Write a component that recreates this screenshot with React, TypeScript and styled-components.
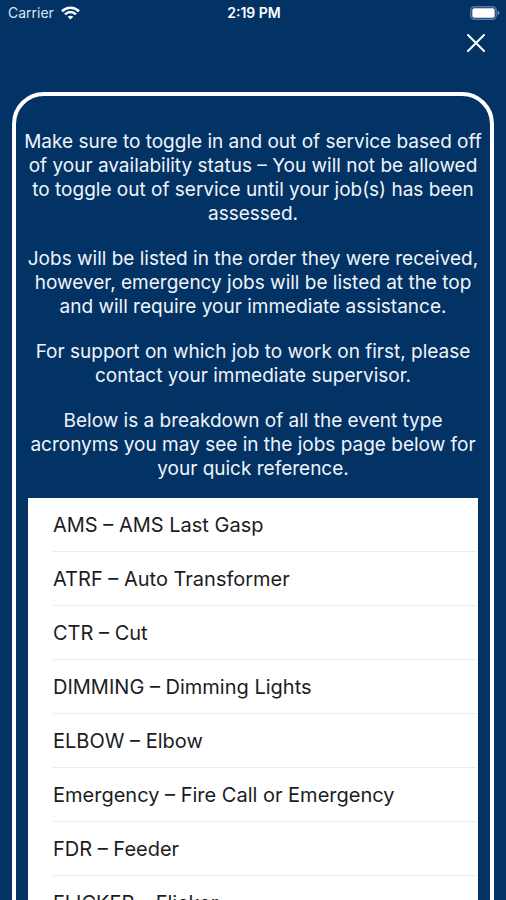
import React from "react";
import styled, { createGlobalStyle } from "styled-components";

const GlobalStyle = createGlobalStyle`
  *, *::before, *::after { box-sizing: border-box; }
  body {
    margin: 0;
    background: #023364;
    font-family: Inter, "Liberation Sans", sans-serif;
  }
`;

const Screen = styled.div`
  display: flex;
  flex-direction: column;
  height: 100vh;
  overflow: hidden;
  background: #023364;
  color: #fff;
`;

const StatusBar = styled.header`
  display: grid;
  grid-template-columns: 1fr auto 1fr;
  align-items: center;
  flex: none;
  height: 26px;
  padding: 0 6px 0 8px;
  font-size: 14px;
  line-height: 16px;
`;

const Carrier = styled.div`
  display: flex;
  align-items: center;
  gap: 7px;
  color: #dfe6ee;
`;

const Clock = styled.time`
  font-weight: 600;
`;

const Battery = styled.div`
  display: flex;
  justify-content: flex-end;
`;

const NavBar = styled.nav`
  display: flex;
  justify-content: flex-end;
  flex: none;
  height: 66px;
  padding: 5px 18px 0;
`;

const CloseButton = styled.button`
  display: flex;
  align-items: center;
  justify-content: center;
  width: 24px;
  height: 24px;
  padding: 0;
  border: 0;
  background: none;
  color: #fff;
  cursor: pointer;
`;

const Scroller = styled.main`
  flex: 1;
  min-height: 0;
  padding: 0 12px;
  overflow-y: auto;
  scrollbar-width: none;
`;

const Card = styled.section`
  padding: 34px 0 24px;
  border: 4px solid #fff;
  border-radius: 32px;
`;

const Intro = styled.div`
  display: flex;
  flex-direction: column;
  gap: 21px;
  font-size: 19px;
  line-height: 24px;
  text-align: center;
  color: #f0f4fa;
`;

const Paragraph = styled.p`
  margin: 0;
`;

const EventList = styled.ul`
  margin: 17px 12px 0;
  padding: 0 2px 0 25px;
  list-style: none;
  background: #fff;
  color: #1c1c1e;
`;

const EventRow = styled.li`
  display: flex;
  align-items: center;
  height: 54px;
  border-bottom: 1px solid #ececee;
  font-size: 20px;
  line-height: 24px;
`;

const paragraphs: string[][] = [
  [
    "Make sure to toggle in and out of service based off",
    "of your availability status – You will not be allowed",
    "to toggle out of service until your job(s) has been",
    "assessed.",
  ],
  [
    "Jobs will be listed in the order they were received,",
    "however, emergency jobs will be listed at the top",
    "and will require your immediate assistance.",
  ],
  [
    "For support on which job to work on first, please",
    "contact your immediate supervisor.",
  ],
  [
    "Below is a breakdown of all the event type",
    "acronyms you may see in the jobs page below for",
    "your quick reference.",
  ],
];

const events: [string, string][] = [
  ["AMS", "AMS Last Gasp"],
  ["ATRF", "Auto Transformer"],
  ["CTR", "Cut"],
  ["DIMMING", "Dimming Lights"],
  ["ELBOW", "Elbow"],
  ["Emergency", "Fire Call or Emergency"],
  ["FDR", "Feeder"],
  ["FLICKER", "Flicker"],
];

const WifiIcon = () => (
  <svg width="19" height="14" viewBox="0 0 19 14" fill="none" stroke="#fff" aria-label="Wi-Fi" role="img">
    <path d="M1 5.2C5.8 0.6 13.2 0.6 18 5.2" strokeWidth="2.6" />
    <path d="M4 8.3C7.2 5.3 11.8 5.3 15 8.3" strokeWidth="2.4" />
    <path d="M9.5 13.6L6.6 10.7C8.3 9.3 10.7 9.3 12.4 10.7Z" fill="#fff" stroke="none" />
  </svg>
);

const BatteryIcon = () => (
  <svg width="30" height="14" viewBox="0 0 30 14" aria-label="Battery full" role="img">
    <rect x="0.8" y="0.8" width="25.4" height="12.4" rx="3.6" fill="none" stroke="#5f7b9b" strokeWidth="1.4" />
    <rect x="2.3" y="2.3" width="22.4" height="9.4" rx="1.8" fill="#fff" />
    <path d="M27.6 4.8Q29.6 5.6 29.6 7Q29.6 8.4 27.6 9.2Z" fill="#7890ac" />
  </svg>
);

const CloseIcon = () => (
  <svg width="18" height="18" viewBox="0 0 18 18" fill="none" stroke="currentColor" strokeWidth="2" strokeLinecap="round" aria-hidden="true">
    <path d="M1 1L17 17M17 1L1 17" />
  </svg>
);

export default function App() {
  return (
    <>
      <GlobalStyle />
      <Screen>
        <StatusBar>
          <Carrier>
            <span>Carrier</span>
            <WifiIcon />
          </Carrier>
          <Clock dateTime="14:19">2:19 PM</Clock>
          <Battery>
            <BatteryIcon />
          </Battery>
        </StatusBar>
        <NavBar>
          <CloseButton type="button" aria-label="Close">
            <CloseIcon />
          </CloseButton>
        </NavBar>
        <Scroller>
          <Card>
            <Intro>
              {paragraphs.map((lines) => (
                <Paragraph key={lines[0]}>
                  {lines.map((line, i) => (
                    <React.Fragment key={line}>
                      {i > 0 && <br />}
                      {line}
                    </React.Fragment>
                  ))}
                </Paragraph>
              ))}
            </Intro>
            <EventList>
              {events.map(([code, label]) => (
                <EventRow key={code}>{`${code} – ${label}`}</EventRow>
              ))}
            </EventList>
          </Card>
        </Scroller>
      </Screen>
    </>
  );
}
